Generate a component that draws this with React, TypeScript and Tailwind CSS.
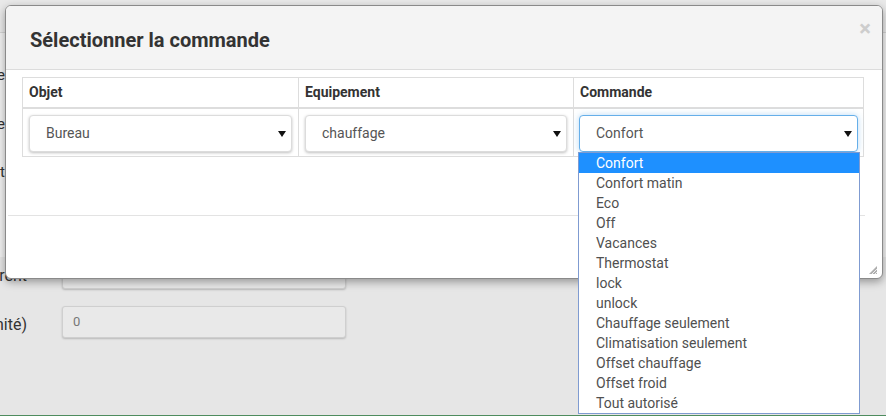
const commandes = [
  "Confort",
  "Confort matin",
  "Eco",
  "Off",
  "Vacances",
  "Thermostat",
  "lock",
  "unlock",
  "Chauffage seulement",
  "Climatisation seulement",
  "Offset chauffage",
  "Offset froid",
  "Tout autorisé",
];

function Caret() {
  return (
    <svg width="8" height="6" viewBox="0 0 8 6" className="shrink-0">
      <path d="M0 0h8L4 6z" fill="#111" />
    </svg>
  );
}

type SelectProps = { value: string; focused?: boolean };

function SelectBox({ value, focused }: SelectProps) {
  return (
    <div
      className={
        focused
          ? "flex h-[37px] items-center justify-between rounded-[4px] border border-[#66afe9] bg-white pl-[16px] pr-[5px] text-[14px] text-[#555] shadow-[0_0_6px_rgba(102,175,233,0.45)]"
          : "flex h-[37px] items-center justify-between rounded-[4px] border border-[#dcdcdc] bg-white pl-[16px] pr-[5px] text-[14px] text-[#555] shadow-[0_1px_3px_rgba(0,0,0,0.25)]"
      }
    >
      <span>{value}</span>
      <Caret />
    </div>
  );
}

function PageRow({ label, value }: { label: string; value: string }) {
  return (
    <div className="flex h-[32px] items-center">
      <div className="flex w-[27px] justify-end overflow-hidden whitespace-nowrap pt-[6px] text-[16px] text-[#333]">
        <span>{label}</span>
      </div>
      <div className="ml-[35px] flex h-[32px] w-[284px] items-center rounded-[3px] border border-[#cfcfcf] bg-[#e9e9e9] pl-[10px] text-[13px] text-[#777] shadow-[0_1px_2px_rgba(0,0,0,0.2)]">
        {value}
      </div>
    </div>
  );
}

export default function App() {
  return (
    <div className="relative h-[416px] w-[886px] overflow-hidden bg-[#e6e6e6] font-['Roboto',sans-serif]">
      {/* page behind the modal */}
      <div className="h-[33px] border-b border-[#d4d4d4] bg-[#e9e9e9]" />
      <div className="flex h-[224px] flex-col gap-[26px] bg-[#f1f1f1] pt-[31px]">
        {["Nom de la zone", "Type de zone", "Mode de fonctionnement"].map((l) => (
          <div key={l} className="flex w-[5px] justify-end overflow-hidden whitespace-nowrap text-[15px] text-[#333]">
            <span>{l}</span>
          </div>
        ))}
      </div>
      <div className="flex flex-col gap-[17px]">
        <PageRow label="Objet parent" value="Aucun" />
        <PageRow label="Pas (en unité)" value="0" />
      </div>
      <div className="absolute bottom-0 left-0 h-px w-full bg-[#4e8c5e]" />

      {/* modal */}
      <div className="absolute left-[5px] top-[5px] flex w-[878px] flex-col overflow-hidden rounded-[6px] border border-[#8a8a8a] bg-white shadow-[0_3px_8px_rgba(0,0,0,0.35)]">
        <div className="relative flex h-[64px] items-center border-b border-[#dcdcdc] bg-[#f4f4f4] pl-[24px] pt-[4px]">
          <h1 className="text-[20px] font-bold text-[#333]">Sélectionner la commande</h1>
          <span className="absolute right-[11px] top-[12px] text-[22px] font-bold leading-none text-[#cdcdcd]">×</span>
        </div>

        <div className="h-[145px] pl-[16px] pt-[7px]">
          <div className="w-[842px] border border-[#dddddd] text-[14px]">
            <div className="flex h-[31px] border-b-2 border-[#dddddd] font-bold text-[#333]">
              <div className="flex w-[275px] items-center pl-[6px]">Objet</div>
              <div className="flex w-[275px] items-center border-l border-[#dddddd] pl-[6px]">Equipement</div>
              <div className="flex flex-1 items-center border-l border-[#dddddd] pl-[6px]">Commande</div>
            </div>
            <div className="flex h-[47px]">
              <div className="w-[275px] px-[6px] pt-[6px]">
                <SelectBox value="Bureau" />
              </div>
              <div className="w-[275px] border-l border-[#dddddd] px-[6px] pt-[6px]">
                <SelectBox value="chauffage" />
              </div>
              <div className="flex-1 border-l border-[#dddddd] px-[5px] pt-[6px]">
                <SelectBox value="Confort" focused />
              </div>
            </div>
          </div>
        </div>

        <div className="relative ml-[2px] mr-[17px] h-[63px] border-t border-[#e3e3e3]" />
        <svg width="8" height="8" viewBox="0 0 8 8" className="absolute bottom-[4px] right-[5px]">
          <path d="M8 0v8H0z" fill="#9a9a9a" opacity="0.8" />
          <path d="M3 8l5-5M6 8l2-2" stroke="#fff" strokeWidth="0.8" />
        </svg>
      </div>

      {/* open dropdown list */}
      <ul className="absolute left-[578px] top-[152px] w-[282px] border border-[#7f9bd1] bg-white text-[14px] text-[#505050]">
        {commandes.map((c, i) => (
          <li
            key={c}
            className={
              i === 0
                ? "flex h-[20px] items-center bg-[#1e90ff] pl-[17px] text-white"
                : "flex h-[20px] items-center pl-[17px]"
            }
          >
            {c}
          </li>
        ))}
      </ul>
    </div>
  );
}
